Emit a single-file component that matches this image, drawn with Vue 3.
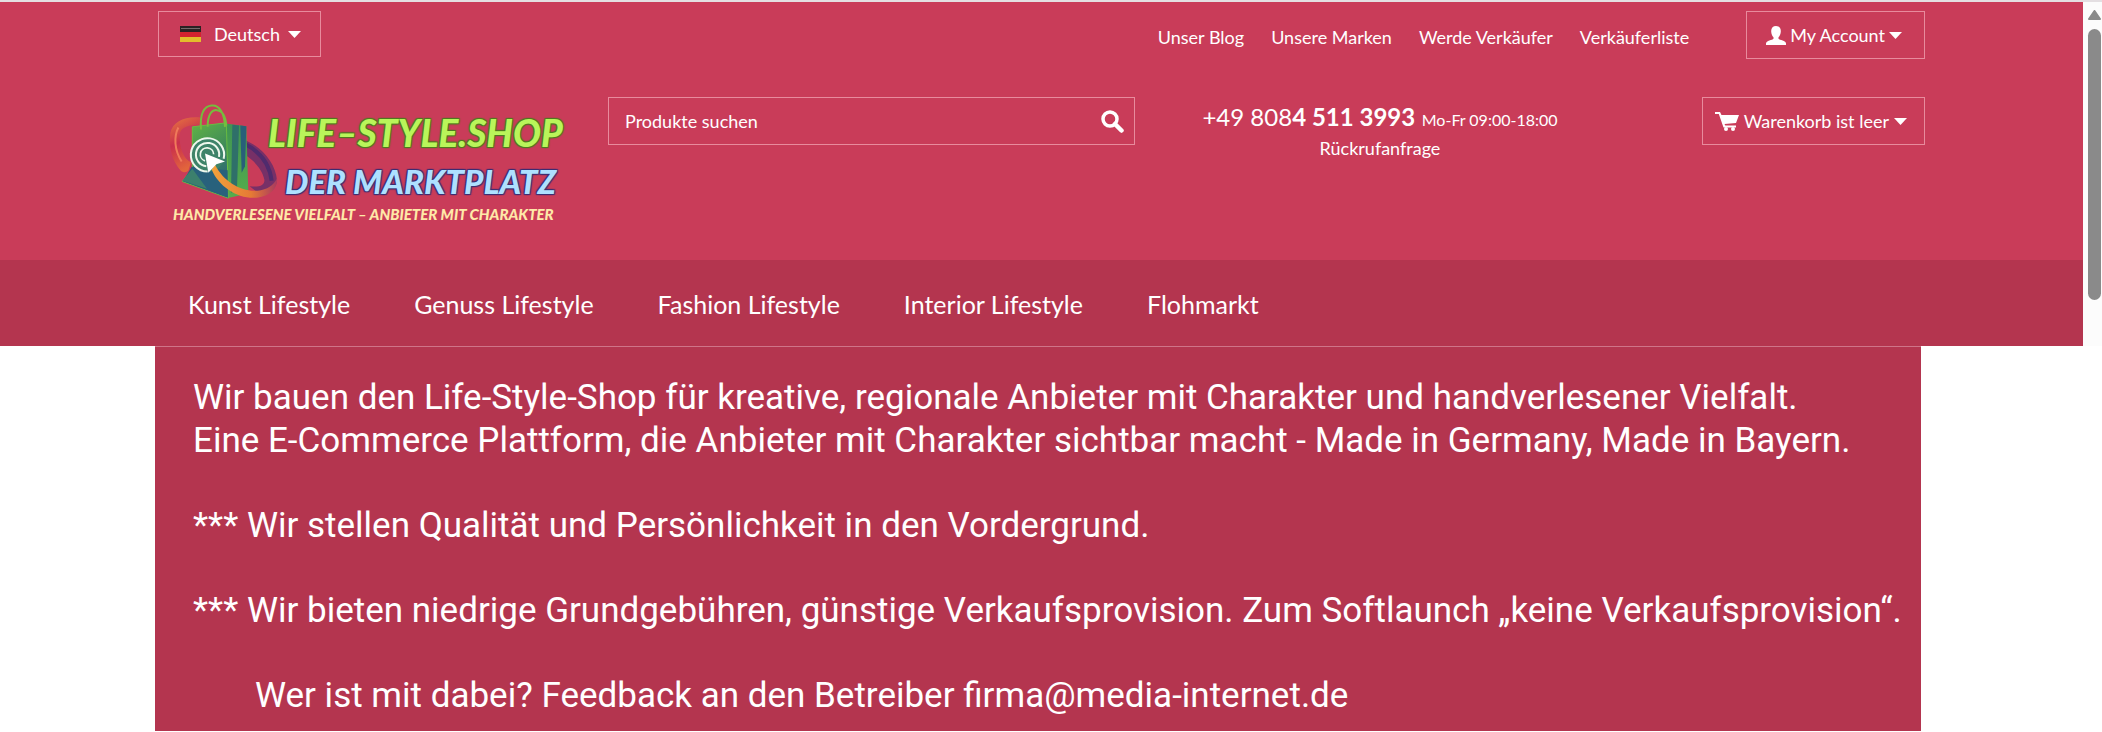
<script setup>
import { ref } from "vue";

const language = ref("Deutsch");
const query = ref("");

const topLinks = ["Unser Blog", "Unsere Marken", "Werde Verkäufer", "Verkäuferliste"];
const categories = ["Kunst Lifestyle", "Genuss Lifestyle", "Fashion Lifestyle", "Interior Lifestyle", "Flohmarkt"];
</script>

<template>
  <div class="page">
    <div class="frame">
      <header class="site">
        <div class="header-main">
          <div class="topbar">
            <div class="box language">
              <svg class="flag" viewBox="0 0 21 16" aria-hidden="true">
                <rect width="21" height="6" fill="#2b2223" />
                <rect x="1" y="2" width="19" height="1" fill="#77696b" />
                <rect y="6" width="21" height="5" fill="#d3232f" />
                <rect y="11" width="21" height="5" fill="#e3bd2c" />
              </svg>
              <select v-model="language" aria-label="Sprache">
                <option>Deutsch</option>
              </select>
              <svg class="caret" viewBox="0 0 13 7" aria-hidden="true"><path d="M0 0h13L6.500 7z" /></svg>
            </div>
            <nav class="top-links">
              <a v-for="link in topLinks" :key="link" href="#">{{ link }}</a>
            </nav>
            <button class="box account" type="button">
              <svg class="icon-user" viewBox="0 0 20 19" aria-hidden="true">
                <path d="M10 0C7 0 5 2 5.200 5.500 5.300 8 6.200 10 7.500 11.200v1.500C6.500 14 0 14.500 0 17.500V19h20v-1.500c0-3-6.500-3.500-7.500-4.800v-1.500C13.800 10 14.700 8 14.800 5.500 15 2 13 0 10 0z" />
              </svg>
              My Account
              <svg class="caret" viewBox="0 0 13 7" aria-hidden="true"><path d="M0 0h13L6.500 7z" /></svg>
            </button>
          </div>

          <div class="main-row">
            <a class="logo" href="#">
              <svg class="bag" viewBox="20 20 336 290" aria-hidden="true">
                <defs>
                  <linearGradient id="front" x1="0.2" y1="0" x2="0.6" y2="1">
                    <stop offset="0" stop-color="#62b345" />
                    <stop offset="0.5" stop-color="#3f8c58" />
                    <stop offset="1" stop-color="#275a80" />
                  </linearGradient>
                  <linearGradient id="side" x1="0" y1="0" x2="0" y2="1">
                    <stop offset="0" stop-color="#3f9453" />
                    <stop offset="1" stop-color="#55ad4c" />
                  </linearGradient>
                  <linearGradient id="loop" x1="0" y1="0" x2="0.3" y2="1">
                    <stop offset="0" stop-color="#e8793f" />
                    <stop offset="0.5" stop-color="#c92f4c" />
                    <stop offset="1" stop-color="#e2653c" />
                  </linearGradient>
                  <linearGradient id="tail" x1="0" y1="0" x2="1" y2="0">
                    <stop offset="0" stop-color="#f2a23b" />
                    <stop offset="0.6" stop-color="#e57a35" />
                    <stop offset="1" stop-color="#a83a5e" />
                  </linearGradient>
                </defs>
                <path d="M120 66C72 62 38 78 30 112c-6 42 6 86 30 112 8 8 18 8 24 2l8-26c-22-8-36-46-34-82 2-24 30-30 62-30z" fill="url(#loop)" />
                <path d="M54 96c-14 28-12 68 10 102" fill="none" stroke="#f07a5a" stroke-width="6" />
                <path d="M254 134c54 22 92 72 96 120-2 26-30 38-62 34l-20-16c32 4 46-4 44-20-6-30-32-58-58-74z" fill="#773067" />
                <path d="M258 148c42 22 70 60 76 108" fill="none" stroke="#4f2b6d" stroke-width="12" />
                <path d="M196 84l62 8 6 202-64 14z" fill="url(#side)" />
                <path d="M216 88l20 2-6 190-18 12z" fill="#2f7069" />
                <path d="M240 90l18 2-4 120-10 20z" fill="#285f79" />
                <path d="M96 94l102-12 6 226-138-50 30-40z" fill="url(#front)" stroke="#69bb42" stroke-width="3" />
                <path d="M94 214l108 10 0 82-134-49z" fill="#28617c" />
                <path d="M66 256l30-36 44 60z" fill="#3c806d" />
                <path d="M122 102c-4-52 12-70 32-72 24-2 38 22 40 64M142 94c0-40 14-52 28-50 18 2 26 22 28 46" fill="none" stroke="#75bd3d" stroke-width="6" />
                <circle cx="142" cy="178" r="51" fill="#3d8369" />
                <g fill="none" stroke="#edf7ed" stroke-width="6">
                  <path d="M142 228a50 50 0 1 1 48-38" />
                  <path d="M138 212a35 35 0 1 1 38-28" />
                  <path d="M134 196a20 20 0 1 1 26-20" stroke-width="5" />
                </g>
                <path d="M164 208c30 58 90 86 138 76 28-6 42-22 48-36 4 28-18 52-56 58-56 8-118-30-140-84z" fill="url(#tail)" />
                <path d="M134 174l60 24-26 8-24 26z" fill="#fff" />
              </svg>
              <span class="logo-text">
                <span class="logo-name">LIFE–STYLE.SHOP</span>
                <span class="logo-sub">DER MARKTPLATZ</span>
              </span>
              <span class="logo-claim">HANDVERLESENE VIELFALT – ANBIETER MIT CHARAKTER</span>
            </a>

            <form class="box search" @submit.prevent>
              <input v-model="query" type="text" aria-label="Produkte suchen" placeholder="Produkte suchen" />
              <button type="submit" aria-label="Suchen">
                <svg class="icon-search" viewBox="0 0 23 23" aria-hidden="true">
                  <circle cx="9" cy="9" r="7" fill="none" stroke="#fff" stroke-width="3.500" />
                  <path d="M14 14l6.500 6.500" stroke="#fff" stroke-width="4.500" stroke-linecap="round" />
                </svg>
              </button>
            </form>

            <div class="contact">
              <div><span class="phone">+49 808<b>4 511 3993</b></span> <span class="hours">Mo-Fr 09:00-18:00</span></div>
              <a href="#">Rückrufanfrage</a>
            </div>

            <button class="box cart" type="button">
              <svg class="icon-cart" viewBox="0 0 24 19" aria-hidden="true">
                <path d="M0 0h5l1.500 3H24l-3 8-11.500 1 .8 1.500H21v2H8.500L3.800 2H0z" />
                <circle cx="11" cy="17" r="2" />
                <circle cx="18" cy="17" r="2" />
              </svg>
              Warenkorb ist leer
              <svg class="caret" viewBox="0 0 13 7" aria-hidden="true"><path d="M0 0h13L6.500 7z" /></svg>
            </button>
          </div>
        </div>

        <nav class="categories">
          <a v-for="category in categories" :key="category" href="#">{{ category }}</a>
        </nav>
      </header>

      <div class="scrollbar" aria-hidden="true">
        <svg viewBox="0 0 13 10"><path d="M6.500 1L12 9H1z" fill="#8a8a8a" stroke="#8a8a8a" stroke-width="2" stroke-linejoin="round" /></svg>
        <div class="thumb"></div>
      </div>
    </div>

    <main class="intro">
      <p>
        Wir bauen den Life-Style-Shop für kreative, regionale Anbieter mit Charakter und handverlesener Vielfalt.<br />
        Eine E-Commerce Plattform, die Anbieter mit Charakter sichtbar macht - Made in Germany, Made in Bayern.
      </p>
      <p>*** Wir stellen Qualität und Persönlichkeit in den Vordergrund.</p>
      <p>*** Wir bieten niedrige Grundgebühren, günstige Verkaufsprovision. Zum Softlaunch „keine Verkaufsprovision“.</p>
      <p class="feedback">Wer ist mit dabei? Feedback an den Betreiber firma@media-internet.de</p>
    </main>
  </div>
</template>

<style>
body {
  margin: 0;
  background: #fff;
}
</style>

<style scoped>
.page {
  font-family: Lato, "Liberation Sans", sans-serif;
  font-size: 18px;
  color: #fff;
}
a {
  color: inherit;
  text-decoration: none;
}
button,
input,
select {
  font: inherit;
  color: inherit;
  background: none;
  border: 0;
  padding: 0;
  margin: 0;
}
.frame {
  display: flex;
  border-top: 2px solid #e4dfe2;
}
.site {
  flex: 1;
  min-width: 0;
}
.header-main {
  box-sizing: border-box;
  min-height: 258px;
  padding: 9px 158px 0;
  background: #c93c59;
}
.box {
  box-sizing: border-box;
  display: flex;
  align-items: center;
  height: 48px;
  border: 1px solid #e88b9d;
  white-space: nowrap;
}
.caret {
  flex-shrink: 0;
  width: 13px;
  height: 7px;
  fill: #fff;
}
.topbar {
  display: flex;
  align-items: flex-start;
  height: 48px;
}
.language {
  height: 46px;
  padding: 0 19px 0 21px;
}
.flag {
  width: 21px;
  height: 16px;
  margin-right: 13px;
}
.language select {
  appearance: none;
  margin-right: 8px;
}
.top-links {
  display: flex;
  gap: 27px;
  margin-left: auto;
  margin-right: 57px;
  line-height: 52px;
}
.account {
  padding: 0 22px 0 19px;
  gap: 4px;
}
.icon-user {
  width: 20px;
  height: 19px;
  fill: #fff;
}
.main-row {
  display: grid;
  grid-template-columns: 450fr 527fr 490fr 300fr;
  align-items: start;
  margin-top: 38px;
}
.logo {
  display: grid;
  grid-template-columns: 101px auto;
  justify-content: start;
  padding: 5px 0 0 9px;
  font-weight: 900;
  font-style: italic;
  white-space: nowrap;
}
.bag {
  width: 112px;
  height: 97px;
}
.logo-text {
  display: flex;
  flex-direction: column;
  padding-top: 7px;
}
.logo-name {
  font-size: 37px;
  line-height: 48px;
  color: #b9f55a;
  text-shadow: 1px 1px 1px #4e7a1e, -1px -1px 1px #4e7a1e, 1px -1px 1px #4e7a1e, -1px 1px 1px #4e7a1e;
}
.logo-sub {
  padding-left: 17px;
  font-size: 33px;
  line-height: 48px;
  color: #aee0ff;
  text-shadow: 1px 1px 1px #3b2d73, -1px -1px 1px #3b2d73, 1px -1px 1px #3b2d73, -1px 1px 1px #3b2d73;
}
.logo-claim {
  grid-column: 1 / 3;
  padding-left: 6px;
  font-size: 15px;
  line-height: 18px;
  color: #ffe9a8;
}
.search {
  padding: 0 10px 0 16px;
}
.search input {
  flex: 1;
  min-width: 0;
  outline: none;
}
.search input::placeholder {
  color: #fff;
  opacity: 1;
}
.icon-search {
  display: block;
  width: 23px;
  height: 23px;
}
.contact {
  text-align: center;
  white-space: nowrap;
  line-height: 28px;
  padding-top: 6px;
}
.phone {
  font-size: 24px;
}
.hours {
  font-size: 16px;
  margin-left: 2px;
}
.cart {
  justify-self: end;
  padding: 0 17px 0 12px;
  gap: 5px;
}
.icon-cart {
  width: 24px;
  height: 19px;
  fill: #fff;
}
.categories {
  display: flex;
  gap: 64px;
  padding: 3px 188px 0;
  background: #b4354f;
  font-size: 25px;
  line-height: 83px;
  white-space: nowrap;
}
.scrollbar {
  display: flex;
  flex-direction: column;
  align-items: center;
  width: 19px;
  background: #fcfcfc;
}
.scrollbar svg {
  width: 13px;
  height: 10px;
  margin: 8px 0 9px 4px;
}
.thumb {
  width: 13px;
  height: 271px;
  margin-left: 4px;
  border-radius: 7px;
  background: #8a8a8a;
}
.intro {
  margin: 0 181px 0 155px;
  padding: 29px 0 14px 38px;
  border-top: 1px solid #cf7488;
  background: #b4354f;
  font-family: Roboto, "Liberation Sans", sans-serif;
  font-size: 35px;
  line-height: 43px;
  white-space: nowrap;
}
.intro p {
  margin: 0 0 42px;
}
.intro .feedback {
  margin: 0;
  padding-left: 62px;
}
</style>
